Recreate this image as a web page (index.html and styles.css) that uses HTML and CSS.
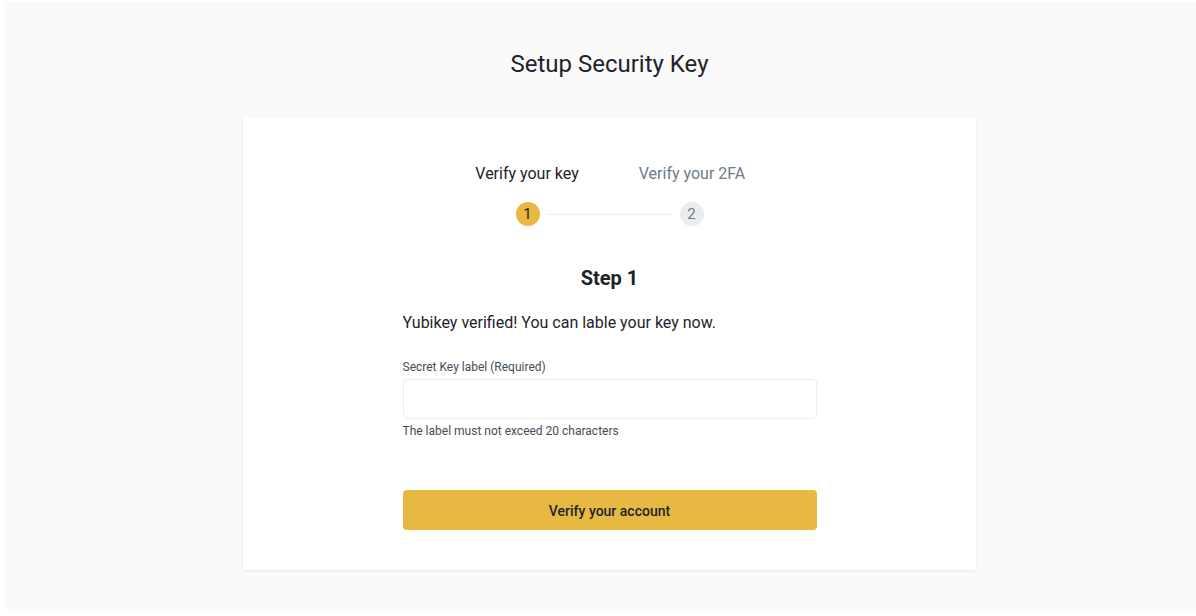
FILE: index.html
```html
<!DOCTYPE html>
<html lang="en">
<head>
<meta charset="utf-8">
<title>Setup Security Key</title>
<link rel="stylesheet" href="styles.css">
</head>
<body>
<div class="page">
  <h1 class="title">Setup Security Key</h1>
  <div class="card">
    <div class="steps">
      <div class="step-labels">
        <div class="step-label active">Verify your key</div>
        <div class="step-label">Verify your 2FA</div>
      </div>
      <div class="step-track">
        <span class="dot active">1</span>
        <span class="line"></span>
        <span class="dot">2</span>
      </div>
    </div>
    <h2 class="step-title">Step 1</h2>
    <div class="form">
      <p class="message">Yubikey verified! You can lable your key now.</p>
      <label class="field-label" for="keylabel">Secret Key label (Required)</label>
      <input class="field-input" id="keylabel" type="text">
      <p class="hint">The label must not exceed 20 characters</p>
      <button class="submit" type="button">Verify your account</button>
    </div>
  </div>
</div>
</body>
</html>
```

FILE: styles.css
```css
html, body {
  margin: 0;
  padding: 0;
  background: #ffffff;
}
body {
  font-family: "Roboto", "Liberation Sans", sans-serif;
  color: #1e2329;
}
.page {
  margin: 2px 0 0 4px;
  height: 607px;
  background: #fafafa;
  display: flex;
  flex-direction: column;
  align-items: center;
  padding-top: 46px;
  padding-left: 19px;
  box-sizing: border-box;
}
.title {
  margin: 0;
  font-size: 24px;
  line-height: 32px;
  font-weight: 400;
  color: #1e2329;
}
.card {
  margin-top: 37px;
  width: 733px;
  height: 453px;
  box-sizing: border-box;
  background: #ffffff;
  box-shadow: 0 1px 3px rgba(0,0,0,0.08);
  padding: 47px 0 40px;
  display: flex;
  flex-direction: column;
  align-items: center;
}
.steps {
  display: flex;
  flex-direction: column;
  align-items: center;
}
.step-labels {
  display: grid;
  grid-template-columns: 165px 165px;
}
.step-label {
  text-align: center;
  font-size: 16px;
  line-height: 20px;
  color: #707a8a;
}
.step-label.active {
  color: #1e2329;
}
.step-track {
  margin-top: 18px;
  display: flex;
  align-items: center;
}
.dot {
  width: 24px;
  height: 24px;
  border-radius: 50%;
  background: #eaecef;
  color: #707a8a;
  font-size: 15px;
  line-height: 24px;
  text-align: center;
}
.dot.active {
  background: #e8b942;
  color: #1e2329;
}
.line {
  width: 126px;
  height: 1px;
  margin: 0 7px;
  background: #eaecef;
}
.step-title {
  margin: 38px 0 0;
  font-size: 20px;
  line-height: 28px;
  font-weight: 700;
}
.form {
  width: 414px;
  display: flex;
  flex-direction: column;
}
.message {
  margin: 19px 0 0;
  font-size: 16px;
  line-height: 24px;
}
.field-label {
  margin-top: 24px;
  font-size: 12px;
  line-height: 16px;
  color: #474d57;
}
.field-input {
  margin-top: 4px;
  height: 40px;
  box-sizing: border-box;
  border: 1px solid #eaecef;
  border-radius: 4px;
  background: #fff;
  outline: none;
  padding: 0 12px;
  font: inherit;
}
.hint {
  margin: 4px 0 0;
  font-size: 12px;
  line-height: 16px;
  color: #474d57;
}
.submit {
  margin-top: 51px;
  height: 40px;
  border: none;
  border-radius: 4px;
  background: #e8b942;
  color: #1e2329;
  font-family: inherit;
  font-size: 14px;
  font-weight: 500;
  padding-top: 2px;
  cursor: pointer;
}
```
